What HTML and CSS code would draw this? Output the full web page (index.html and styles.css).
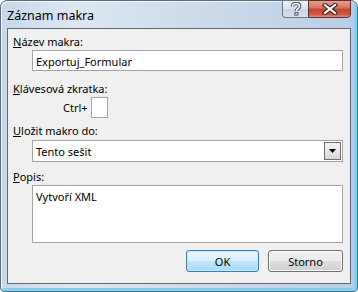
FILE: index.html
```html
<!DOCTYPE html>
<html lang="cs">
<head>
    <meta charset="UTF-8">
    <title>Záznam makra</title>
    <link rel="stylesheet" href="styles.css">
</head>
<body>
<div class="window">
    <div class="titlebar">
        <span class="title">Záznam makra</span>
        <div class="caption-btns">
            <div class="cap help">
                <svg width="12" height="14" viewBox="0 0 12 14">
                    <path d="M2.5 4.5 Q2.5 1.5 6 1.5 Q9.5 1.5 9.5 4.2 Q9.5 6 7.5 7 Q6.5 7.5 6.5 9" fill="none" stroke="#4a4f57" stroke-width="3.6"/>
                    <rect x="4.4" y="10.2" width="4" height="3.4" fill="#4a4f57"/>
                    <path d="M2.5 4.5 Q2.5 1.5 6 1.5 Q9.5 1.5 9.5 4.2 Q9.5 6 7.5 7 Q6.5 7.5 6.5 9" fill="none" stroke="#fff" stroke-width="1.6"/>
                    <rect x="5.4" y="11.2" width="2" height="1.4" fill="#fff"/>
                </svg>
            </div>
            <div class="cap close">
                <svg width="16" height="12" viewBox="0 0 16 12">
                    <path d="M3 2 L13 10 M13 2 L3 10" stroke="#3b2a2a" stroke-width="4.4" stroke-linecap="square"/>
                    <path d="M3 2 L13 10 M13 2 L3 10" stroke="#fff" stroke-width="2.2" stroke-linecap="square"/>
                </svg>
            </div>
        </div>
    </div>

    <div class="client">
        <div class="label"><u>N</u>ázev makra:</div>
        <div class="field text">Exportuj_Formular</div>

        <div class="label"><u>K</u>lávesová zkratka:</div>
        <div class="shortcut">
            <span>Ctrl+</span>
            <div class="keybox"></div>
        </div>

        <div class="label"><u>U</u>ložit makro do:</div>
        <div class="field combo">
            <span>Tento sešit</span>
            <div class="drop">
                <svg width="7" height="4" viewBox="0 0 7 4"><path d="M0 0 H7 L3.5 4 Z" fill="#000"/></svg>
            </div>
        </div>

        <div class="label"><u>P</u>opis:</div>
        <div class="field area">Vytvoří XML</div>

        <div class="buttons">
            <div class="btn default">OK</div>
            <div class="btn">Storno</div>
        </div>
    </div>
</div>
</body>
</html>
```

FILE: styles.css
```css
body {
    margin: 0;
    width: 358px;
    height: 292px;
    overflow: hidden;
    font-family: "Noto Sans", "DejaVu Sans", sans-serif;
    font-size: 11px;
    color: #000;
}

.window {
    box-sizing: border-box;
    width: 358px;
    height: 292px;
    border: 1px solid #5c6b7d;
    border-radius: 7px 7px 4px 4px;
    background: linear-gradient(to right, #c7d8ea 0%, #dde7f2 20%, #cfdcea 50%, #c3d4e8 80%, #b8cde4 100%);
    box-shadow: inset 1px 1px 0 #f4f8fc, inset -3px -3px 0 #7ed3f3;
    display: flex;
    flex-direction: column;
}

.titlebar {
    height: 27px;
    display: flex;
    align-items: flex-start;
}

.title {
    padding: 6px 0 0 6px;
    font-size: 12.5px;
    color: #000;
}

.caption-btns {
    margin-left: auto;
    margin-top: -1px;
    margin-right: 6px;
    display: flex;
}

.cap {
    height: 18px;
    box-sizing: border-box;
    border: 1px solid #6d7986;
    display: flex;
    align-items: center;
    justify-content: center;
}

.help {
    width: 26px;
    border-right: none;
    border-radius: 0 0 0 4px;
    background: linear-gradient(#eef3f9, #d8e2ee 50%, #c6d3e2 51%, #d6e1ee);
}

.close {
    width: 43px;
    border-radius: 0 0 4px 0;
    border-color: #5b2f2c;
    background: linear-gradient(#e8a08e, #d8705a 45%, #c7402a 50%, #d25a42 85%, #e4957a);
}

.client {
    flex: 1;
    margin: 0 6px 7px 6px;
    border: 1px solid #5f6a76;
    background: #f0f0f0;
    padding: 6px 7px 0 5px;
    display: flex;
    flex-direction: column;
}

.label {
    height: 14px;
    line-height: 14px;
}

.field {
    margin-left: 19px;
    background: #fff;
    border: 1px solid #a5a5a5;
    box-sizing: border-box;
}

.text {
    height: 21px;
    margin-top: 1px;
    margin-bottom: 11px;
    padding: 3px 0 0 3px;
}

.shortcut {
    display: flex;
    align-items: center;
    margin: 1px 0 6px 50px;
    gap: 3px;
}

.keybox {
    width: 17px;
    height: 21px;
    box-sizing: border-box;
    background: #fff;
    border: 1px solid #a5a5a5;
}

.combo {
    height: 22px;
    margin-top: 2px;
    margin-bottom: 8px;
    padding-left: 3px;
    display: flex;
    align-items: center;
}

.combo span {
    flex: 1;
}

.drop {
    width: 17px;
    height: 18px;
    margin-right: 1px;
    box-sizing: border-box;
    border: 1px solid #6f6f6f;
    background: linear-gradient(#f4f4f4, #e6e6e6 50%, #d8d8d8);
    display: flex;
    align-items: center;
    justify-content: center;
}

.area {
    height: 58px;
    margin-top: 1px;
    padding: 3px 0 0 3px;
}

.buttons {
    display: flex;
    justify-content: flex-end;
    gap: 9px;
    margin-top: 7px;
}

.btn {
    width: 73px;
    height: 22px;
    box-sizing: border-box;
    border: 1px solid #707070;
    border-radius: 3px;
    background: linear-gradient(#f2f2f2, #ebebeb 50%, #dddddd 51%, #cfcfcf);
    box-shadow: inset 0 0 0 1px #fcfcfc;
    display: flex;
    align-items: center;
    justify-content: center;
}

.btn:last-child {
    width: 75px;
}

.default {
    border-color: #3c7fb1;
    background: linear-gradient(#eaf6fd, #d9f0fc 50%, #bee6fd 51%, #a7d9f5);
    box-shadow: inset 0 0 0 1px #c4e8fb;
}
```
